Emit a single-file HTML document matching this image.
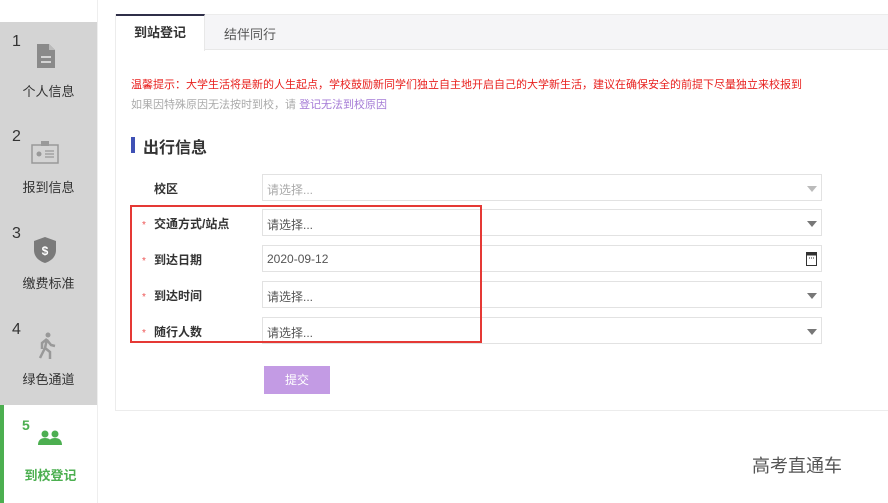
<!DOCTYPE html><html><head><meta charset="utf-8"><style>
*{margin:0;padding:0;box-sizing:border-box}
body{width:888px;height:503px;background:#fff;font-family:"Liberation Sans","Noto Sans CJK SC",sans-serif;position:relative;overflow:hidden;color:#333}
.a{position:absolute}
.side{left:0;top:22px;width:97px;height:383px;background:#d4d4d4}
.num{font-size:16px;color:#333}
.lab{font-size:13px;color:#333;width:97px;text-align:center}
.inp{position:absolute;left:262px;width:560px;height:27px;border:1px solid #e2e2e2;background:#fff;font-size:12px;color:#555;padding:6px 4px}
.tri{position:absolute;right:4px;top:11px;border-left:5px solid transparent;border-right:5px solid transparent;border-top:6px solid #777}
.fl{position:absolute;left:154px;font-size:12px;font-weight:bold;color:#333}
.st{position:absolute;left:142px;font-size:10px;color:#e55}
</style></head><body>
<div class="a side"></div>
<div class="a" style="left:97px;top:0;width:1px;height:503px;background:#eee"></div>
<div class="a num" style="left:12px;top:33px">1</div>
<svg class="a" style="left:36px;top:43px" width="20" height="26" viewBox="0 0 20 26"><path d="M1 1h12l6 6v18H1z" fill="#8a8a8a"/><path d="M13 1v6h6" fill="#bbb"/><rect x="5" y="13" width="10" height="2" fill="#d4d4d4"/><rect x="5" y="18" width="10" height="2" fill="#d4d4d4"/></svg>
<div class="a lab" style="left:0;top:81px">个人信息</div>
<div class="a num" style="left:12px;top:128px">2</div>
<svg class="a" style="left:31px;top:140px" width="28" height="24" viewBox="0 0 28 24"><rect x="1" y="5" width="26" height="18" fill="none" stroke="#999" stroke-width="1.5"/><rect x="10" y="1" width="8" height="5" fill="#999"/><circle cx="8" cy="14" r="2.5" fill="#999"/><path d="M14 11h9M14 14h9M14 17h9" stroke="#999" stroke-width="1.2"/></svg>
<div class="a lab" style="left:0;top:177px">报到信息</div>
<div class="a num" style="left:12px;top:225px">3</div>
<svg class="a" style="left:33px;top:236px" width="24" height="28" viewBox="0 0 24 28"><path d="M12 1L23 5v9c0 7-5 11-11 13C6 25 1 21 1 14V5z" fill="#7a7a7a"/><text x="12" y="19" font-size="12" font-weight="bold" fill="#fff" text-anchor="middle" font-family="Liberation Sans">$</text></svg>
<div class="a lab" style="left:0;top:273px">缴费标准</div>
<div class="a num" style="left:12px;top:321px">4</div>
<svg class="a" style="left:36px;top:332px" width="20" height="28" viewBox="0 0 20 28"><circle cx="12" cy="3" r="2.5" fill="#999"/><path d="M11 7l-5 4v6M11 7l-2 9 5 4v7M9 16l-5 10M11 8l4 5 4 1" stroke="#999" stroke-width="2.5" fill="none"/></svg>
<div class="a lab" style="left:0;top:369px">绿色通道</div>
<div class="a" style="left:0;top:405px;width:4px;height:98px;background:#4caf50"></div>
<div class="a" style="left:22px;top:417px;font-size:14px;font-weight:bold;color:#4caf50">5</div>
<svg class="a" style="left:37px;top:430px" width="26" height="16" viewBox="0 0 26 16"><circle cx="8" cy="4" r="3.5" fill="#4caf50"/><circle cx="18" cy="4" r="3.5" fill="#4caf50"/><path d="M1 15c0-5 3-7 7-7s7 2 7 7zM11 15c0-5 3-7 7-7s7 2 7 7z" fill="#4caf50"/></svg>
<div class="a lab" style="left:2px;top:465px;color:#4caf50;font-weight:bold">到校登记</div>

<div class="a" style="left:115px;top:14px;width:775px;height:397px;border:1px solid #ececec;background:#fff"></div>
<div class="a" style="left:116px;top:15px;width:772px;height:35px;background:#f5f5f7;border-bottom:1px solid #e8e8e8"></div>
<div class="a" style="left:116px;top:14px;width:89px;height:37px;background:#fff;border-top:2px solid #2f2f48;font-size:13px;font-weight:bold;text-align:center;line-height:34px;border-right:1px solid #e8e8e8">到站登记</div>
<div class="a" style="left:224px;top:24px;font-size:13px;color:#555">结伴同行</div>

<div class="a" style="left:131px;top:76px;font-size:11px;color:#e8201e;white-space:nowrap">温馨提示：大学生活将是新的人生起点，学校鼓励新同学们独立自主地开启自己的大学新生活，建议在确保安全的前提下尽量独立来校报到</div>
<div class="a" style="left:131px;top:96px;font-size:11px;color:#aaa;white-space:nowrap">如果因特殊原因无法按时到校，请 <span style="color:#a57bd6">登记无法到校原因</span></div>
<div class="a" style="left:131px;top:137px;width:4px;height:16px;background:#3f51b5"></div>
<div class="a" style="left:143px;top:134px;font-size:16px;font-weight:bold;color:#333">出行信息</div>

<div class="fl" style="top:180px">校区</div>
<div class="inp" style="top:174px;color:#aaa">请选择...<div class="tri" style="border-top-color:#bbb"></div></div>
<div class="st" style="top:220px">*</div><div class="fl" style="top:215px">交通方式/站点</div>
<div class="inp" style="top:209px">请选择...<div class="tri"></div></div>
<div class="st" style="top:256px">*</div><div class="fl" style="top:251px">到达日期</div>
<div class="inp" style="top:245px">2020-09-12<svg style="position:absolute;right:4px;top:6px" width="11" height="14" viewBox="0 0 11 14"><rect x="0.5" y="0.5" width="10" height="13" fill="none" stroke="#333"/><rect x="0.5" y="0.5" width="10" height="3" fill="#333"/><path d="M3 6h1M5 6h1M7 6h1" stroke="#333"/></svg></div>
<div class="st" style="top:292px">*</div><div class="fl" style="top:287px">到达时间</div>
<div class="inp" style="top:281px">请选择...<div class="tri"></div></div>
<div class="st" style="top:328px">*</div><div class="fl" style="top:323px">随行人数</div>
<div class="inp" style="top:317px">请选择...<div class="tri"></div></div>
<div class="a" style="left:130px;top:205px;width:352px;height:138px;border:2px solid #e53935"></div>
<div class="a" style="left:264px;top:366px;width:66px;height:28px;background:#c39be4;color:#fff;font-size:12px;text-align:center;line-height:28px">提交</div>
<div class="a" style="left:752px;top:452px;font-size:18px;color:#555">高考直通车</div>
</body></html>
